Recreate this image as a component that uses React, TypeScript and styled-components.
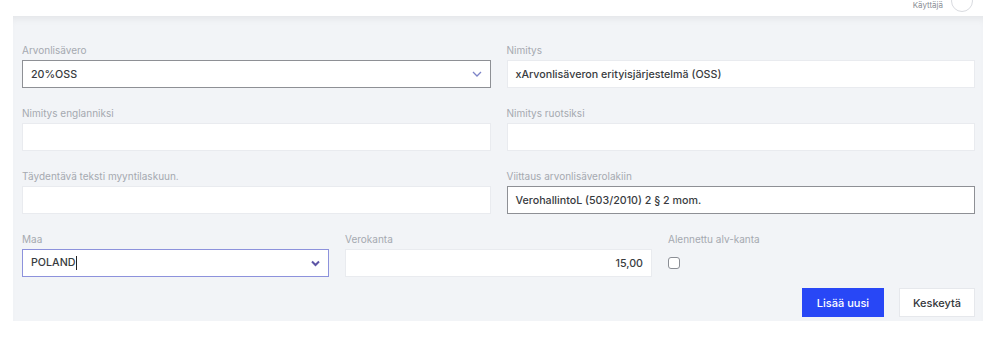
import styled, { createGlobalStyle } from 'styled-components';

const GlobalStyle = createGlobalStyle`
  body {
    margin: 0;
    background: #ffffff;
    font-family: Inter, "Noto Sans", sans-serif;
  }
`;

const TopBar = styled.div`
  height: 16px;
  display: flex;
  justify-content: flex-end;
  align-items: flex-end;
  gap: 8px;
  padding-right: 26px;
  overflow: hidden;
`;

const UserName = styled.span`
  font-size: 8px;
  line-height: 9px;
  color: #8a8e95;
  margin-bottom: 6px;
`;

const Avatar = styled.div`
  width: 20px;
  height: 20px;
  border-radius: 50%;
  border: 1px solid #d9dbe0;
  margin-bottom: 4px;
`;

const Panel = styled.div`
  margin: 0 16px 0 13px;
  background: #f2f4f7;
  box-shadow: inset 0 7px 8px -5px rgba(0, 0, 0, 0.07);
  padding: 28px 8px 4px 9px;
`;

const Grid = styled.div<{ cols: number }>`
  display: grid;
  grid-template-columns: repeat(${(p) => p.cols}, 1fr);
  column-gap: 16px;
  margin-bottom: 19px;
`;

const Field = styled.div`
  display: flex;
  flex-direction: column;
  gap: 4px;
  min-width: 0;
`;

const Label = styled.label`
  font-size: 10px;
  line-height: 12px;
  color: #a5a9b0;
`;

const Box = styled.div<{ variant?: 'plain' | 'dark' | 'focus'; align?: 'left' | 'right' }>`
  box-sizing: border-box;
  height: 28px;
  background: #ffffff;
  border: 1px solid
    ${(p) =>
      p.variant === 'dark' ? '#8e9095' : p.variant === 'focus' ? '#8d92dc' : '#e9ebef'};
  display: flex;
  align-items: center;
  justify-content: ${(p) => (p.align === 'right' ? 'flex-end' : 'space-between')};
  padding: 0 8px;
  font-size: 10.7px;
  font-weight: 500;
  color: #383b40;
`;

const Caret = styled.span`
  display: inline-block;
  width: 1px;
  height: 14px;
  background: #222;
  vertical-align: middle;
  margin-left: 1px;
`;

const CheckRow = styled.div`
  height: 28px;
  display: flex;
  align-items: center;
`;

const Checkbox = styled.span`
  box-sizing: border-box;
  width: 12px;
  height: 12px;
  border: 1.5px solid #8b8e95;
  border-radius: 3px;
  background: #ffffff;
`;

const Actions = styled.div`
  display: flex;
  justify-content: flex-end;
  gap: 15px;
`;

const Button = styled.button<{ primary?: boolean }>`
  box-sizing: border-box;
  height: 29px;
  width: ${(p) => (p.primary ? 82 : 76)}px;
  padding: 0;
  border: 1px solid ${(p) => (p.primary ? '#2847f6' : '#e6e8ec')};
  background: ${(p) => (p.primary ? '#2847f6' : '#ffffff')};
  color: ${(p) => (p.primary ? '#ffffff' : '#33363b')};
  font-family: Inter, "Noto Sans", sans-serif;
  font-size: 11px;
  font-weight: 500;
`;

const ThinChevron = () => (
  <svg width="10" height="6" viewBox="0 0 10 6">
    <path d="M1 1l4 4 4-4" fill="none" stroke="#7d84c8" strokeWidth="1.3" />
  </svg>
);

const BoldChevron = () => (
  <svg width="9" height="7" viewBox="0 0 9 7">
    <path d="M1 1.5l3.5 3.5 3.5-3.5" fill="none" stroke="#5d55a6" strokeWidth="2" />
  </svg>
);

export default function App() {
  return (
    <>
      <GlobalStyle />
      <TopBar>
        <UserName>Käyttäjä</UserName>
        <Avatar />
      </TopBar>
      <Panel>
        <Grid cols={2}>
          <Field>
            <Label>Arvonlisävero</Label>
            <Box variant="dark">
              <span>20%OSS</span>
              <ThinChevron />
            </Box>
          </Field>
          <Field>
            <Label>Nimitys</Label>
            <Box>xArvonlisäveron erityisjärjestelmä (OSS)</Box>
          </Field>
        </Grid>
        <Grid cols={2}>
          <Field>
            <Label>Nimitys englanniksi</Label>
            <Box />
          </Field>
          <Field>
            <Label>Nimitys ruotsiksi</Label>
            <Box />
          </Field>
        </Grid>
        <Grid cols={2}>
          <Field>
            <Label>Täydentävä teksti myyntilaskuun.</Label>
            <Box />
          </Field>
          <Field>
            <Label>Viittaus arvonlisäverolakiin</Label>
            <Box variant="dark">VerohallintoL (503/2010) 2 § 2 mom.</Box>
          </Field>
        </Grid>
        <Grid cols={3} style={{ marginBottom: 11 }}>
          <Field>
            <Label>Maa</Label>
            <Box variant="focus">
              <span>
                POLAND
                <Caret />
              </span>
              <BoldChevron />
            </Box>
          </Field>
          <Field>
            <Label>Verokanta</Label>
            <Box align="right">15,00</Box>
          </Field>
          <Field>
            <Label>Alennettu alv-kanta</Label>
            <CheckRow>
              <Checkbox />
            </CheckRow>
          </Field>
        </Grid>
        <Actions>
          <Button primary>Lisää uusi</Button>
          <Button>Keskeytä</Button>
        </Actions>
      </Panel>
    </>
  );
}
